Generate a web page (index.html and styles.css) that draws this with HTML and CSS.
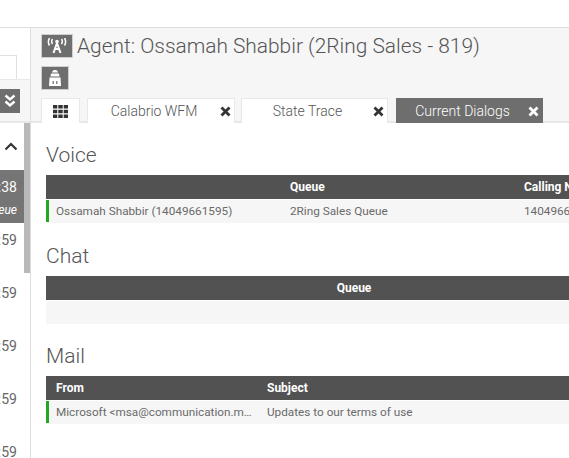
FILE: index.html
```html
<!DOCTYPE html>
<html lang="en">
<head>
    <meta charset="UTF-8">
    <meta name="viewport" content="width=device-width, initial-scale=1.0">
    <title>Agent: Ossamah Shabbir</title>
    <link rel="stylesheet" href="styles.css">
</head>
<body>
    <div class="topbar"></div>
    <div class="app">
        <div class="sidebar">
            <div class="side-top">
                <div class="side-input"></div>
            </div>
            <div class="side-head">
                <button class="side-btn">
                    <svg width="12" height="14" viewBox="0 0 12 14"><path d="M1.500 1.500 6 5.500l4.500-4M1.500 7.500 6 11.500l4.500-4" fill="none" stroke="#fff" stroke-width="2.400"/></svg>
                </button>
            </div>
            <div class="side-list">
                <div class="side-scroll">
                    <div class="side-toggle">
                        <svg width="14" height="9" viewBox="0 0 14 9"><path d="M1.500 7.500 7 2l5.500 5.500" fill="none" stroke="#333" stroke-width="2.200"/></svg>
                    </div>
                    <div class="side-item active"><div class="time">00:00:38</div><div class="sub">Sales Queue</div></div>
                    <div class="side-item"><div class="time">00:00:59</div></div>
                    <div class="side-item"><div class="time">00:00:59</div></div>
                    <div class="side-item"><div class="time">00:00:59</div></div>
                    <div class="side-item"><div class="time">00:00:59</div></div>
                    <div class="side-item"><div class="time">00:00:59</div></div>
                </div>
                <div class="scrollbar"></div>
            </div>
        </div>
        <div class="main">
            <div class="header">
                <div class="title-row">
                    <span class="icon-box wide">
                        <svg width="20" height="16" viewBox="0 0 20 16" fill="none" stroke="#fff"><path d="M10 5 6.500 15M10 5l3.500 10M8 11h4" stroke-width="2"/><circle cx="10" cy="3.500" r="1.800" fill="#fff" stroke="none"/><path d="M5.500 1C4.500 2.500 4.500 4.500 5.500 6M14.500 1c1 1.500 1 3.500 0 5M2.500 0C1 2.500 1 5 2.500 7.500M17.500 0c1.500 2.500 1.500 5 0 7.500" stroke-width="1.500"/></svg>
                    </span>
                    <h2>Agent: Ossamah Shabbir (2Ring Sales - 819)</h2>
                </div>
                <div class="status-row">
                    <span class="icon-box">
                        <svg width="14" height="18" viewBox="0 0 14 18" fill="#fff"><path d="M4 3.500C4.500 1.500 5.500 1 7 1s2.500.5 3 2.500zM3 4.500h8l.5 3h-9zM1.500 8.500h11L13 17H1z"/><path d="M4.500 12h1.500v3H4.500zM8 12h1.500v3H8z" fill="#888"/></svg>
                    </span>
                </div>
                <div class="tabs">
                    <div class="tab grid-tab">
                        <svg width="15" height="13" viewBox="0 0 15 13" fill="#333"><path d="M0 0h4.300v3.500H0zM5.300 0h4.400v3.500H5.300zM10.700 0H15v3.500h-4.300zM0 4.750h4.300v3.500H0zM5.300 4.750h4.400v3.500H5.300zM10.700 4.750H15v3.500h-4.300zM0 9.500h4.300V13H0zM5.300 9.500h4.400V13H5.300zM10.700 9.500H15V13h-4.300z"/></svg>
                    </div>
                    <div class="tab calabrio">
                        <span class="tab-name">Calabrio WFM</span>
                        <svg class="tab-x" width="11" height="11" viewBox="0 0 11 11"><path d="M1.500 1.500l8 8M9.500 1.500l-8 8" stroke="#333" stroke-width="2.800"/></svg>
                    </div>
                    <div class="tab trace">
                        <span class="tab-name">State Trace</span>
                        <svg class="tab-x" width="11" height="11" viewBox="0 0 11 11"><path d="M1.500 1.500l8 8M9.500 1.500l-8 8" stroke="#333" stroke-width="2.800"/></svg>
                    </div>
                    <div class="tab current">
                        <span class="tab-name">Current Dialogs</span>
                        <svg class="tab-x" width="11" height="11" viewBox="0 0 11 11"><path d="M1.500 1.500l8 8M9.500 1.500l-8 8" stroke="#fff" stroke-width="2.800"/></svg>
                    </div>
                </div>
            </div>
            <div class="content">
                <h3 class="first">Voice</h3>
                <div class="table voice">
                    <div class="thead"><span></span><span>Queue</span><span>Calling Number</span></div>
                    <div class="trow"><span>Ossamah Shabbir (14049661595)</span><span>2Ring Sales Queue</span><span>14049661595</span></div>
                </div>
                <h3>Chat</h3>
                <div class="table chat">
                    <div class="thead"><span></span><span class="center">Queue</span></div>
                    <div class="trow empty"></div>
                </div>
                <h3 class="last">Mail</h3>
                <div class="table mail">
                    <div class="thead"><span>From</span><span>Subject</span></div>
                    <div class="trow"><span class="clip">Microsoft &lt;msa@communication.microsoft.com&gt;</span><span>Updates to our terms of use</span></div>
                </div>
            </div>
        </div>
    </div>
</body>
</html>
```

FILE: styles.css
```css
html, body {
    margin: 0;
    padding: 0;
    width: 569px;
    height: 458px;
    overflow: hidden;
    background: #fff;
    font-family: 'Roboto', 'Liberation Sans', sans-serif;
    color: #555;
}
.topbar {
    height: 27px;
    background: #fff;
    border-bottom: 1px solid #dedede;
}
.app {
    display: flex;
    height: 430px;
}
.sidebar {
    width: 31px;
    flex: none;
    box-sizing: border-box;
    border-right: 1px solid #dedede;
    background: #fff;
    overflow: hidden;
}
.side-top {
    height: 52px;
    box-sizing: border-box;
    padding-top: 27px;
    border-bottom: 1px solid #e8e8e8;
}
.side-input {
    width: 17px;
    height: 24px;
    box-sizing: border-box;
    border: 1px solid #e0e0e0;
    border-left: none;
    border-bottom: none;
}
.side-head {
    height: 43px;
    box-sizing: border-box;
    padding-top: 9px;
    background: #f6f6f6;
    border-bottom: 2px solid #e8e8e8;
}
.side-btn {
    display: flex;
    align-items: center;
    justify-content: center;
    width: 20px;
    height: 24px;
    padding: 0;
    border: none;
    background: #6e6e6e;
}
.side-list {
    display: flex;
    height: 335px;
}
.side-scroll {
    width: 24px;
    flex: none;
    overflow: hidden;
}
.side-toggle {
    height: 47px;
    display: flex;
    align-items: center;
    justify-content: flex-end;
    padding-right: 6px;
    box-sizing: border-box;
}
.scrollbar {
    width: 6px;
    height: 150px;
    background: #b9b9b9;
}
.side-item {
    height: 53px;
    box-sizing: border-box;
    padding-top: 9px;
    padding-right: 7px;
    font-size: 14px;
    color: #666;
}
.side-item .time, .side-item .sub {
    display: flex;
    justify-content: flex-end;
    white-space: nowrap;
}
.side-item .sub {
    font-size: 12px;
    font-style: italic;
    margin-top: 8px;
}
.side-item.active {
    background: #757575;
    color: #fff;
}
.main {
    flex: 1;
    min-width: 0;
    overflow: hidden;
}
.header {
    height: 95px;
    box-sizing: border-box;
    background: #f6f6f6;
    border-bottom: 2px solid #e8e8e8;
    padding: 6px 0 0 10px;
}
.title-row {
    display: flex;
    align-items: center;
    gap: 4px;
    height: 24px;
}
.title-row h2 {
    margin: 0;
    font-size: 20.9px;
    font-weight: 300;
    color: #555;
    white-space: nowrap;
}
.icon-box {
    display: inline-flex;
    align-items: center;
    justify-content: center;
    box-sizing: border-box;
    width: 28px;
    height: 24px;
    background: #6e6e6e;
    border: 1px solid #cfcfcf;
    flex: none;
}
.icon-box.wide {
    width: 32px;
}
.status-row {
    height: 24px;
    margin-top: 8px;
}
.tabs {
    display: flex;
    margin-top: 8px;
    height: 25px;
}
.tab {
    display: flex;
    align-items: center;
    box-sizing: border-box;
    height: 25px;
    background: #fff;
    border: 1px solid #e8e8e8;
    border-bottom: none;
    flex: none;
    font-size: 14px;
    font-weight: 300;
    color: #555;
}
.tab-name {
    flex: 1;
    text-align: center;
}
.tab-x {
    margin-right: 3px;
}
.grid-tab {
    width: 39px;
    justify-content: center;
    margin-right: 7px;
}
.calabrio {
    width: 148px;
    margin-right: 6px;
}
.trace {
    width: 147px;
    margin-right: 8px;
}
.current {
    width: 147px;
    background: #6e6e6e;
    border-color: #6e6e6e;
    color: #fff;
}
.content {
    padding-left: 15px;
}
.content h3 {
    margin: 0;
    height: 53px;
    box-sizing: border-box;
    padding-top: 20px;
    font-size: 21px;
    line-height: 26px;
    font-weight: 300;
    color: #555;
}
.content h3.first {
    height: 52px;
    padding-top: 19px;
}
.content h3.last {
    height: 52px;
    padding-top: 19px;
}
.table {
    width: 700px;
    font-size: 12px;
}
.thead, .trow {
    display: grid;
    height: 24px;
    box-sizing: border-box;
}
.voice .thead, .voice .trow {
    grid-template-columns: 234px 234px 232px;
}
.chat .thead {
    grid-template-columns: 234px 148px;
}
.mail .thead, .mail .trow {
    grid-template-columns: 211px 489px;
}
.thead {
    background: #525252;
    color: #fff;
    font-weight: 700;
    align-items: center;
}
.thead span, .trow span {
    padding-left: 10px;
    white-space: nowrap;
}
.thead .center {
    text-align: center;
    padding: 0;
}
.trow {
    background: #f6f6f6;
    border-top: 1px solid #fff;
    color: #6a6a6a;
    font-size: 11.75px;
    align-items: start;
}
.trow span {
    height: 22px;
    line-height: 22px;
}
.trow span:first-child {
    border-left: 3px solid #22a822;
    padding-left: 7px;
}
.trow .clip {
    overflow: hidden;
    text-overflow: ellipsis;
    padding-right: 4px;
}
```
